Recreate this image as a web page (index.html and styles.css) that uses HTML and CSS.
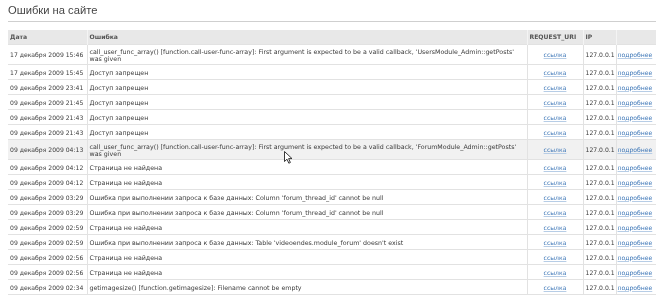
FILE: index.html
```html
<!DOCTYPE html>
<html lang="ru">
<head>
<meta charset="utf-8">
<title>Ошибки на сайте</title>
<link rel="stylesheet" href="styles.css">
</head>
<body>
<h1 class="title">Ошибки на сайте</h1>
<table class="errors">
<colgroup>
<col class="c-date"><col class="c-err"><col class="c-uri"><col class="c-ip"><col class="c-more">
</colgroup>
<thead>
<tr><th>Дата</th><th>Ошибка</th><th>REQUEST_URI</th><th>IP</th><th></th></tr>
</thead>
<tbody>
<tr><td>17 декабря 2009 15:46</td><td>call_user_func_array() [function.call-user-func-array]: First argument is expected to be a valid callback, 'UsersModule_Admin::getPosts' was given</td><td class="uri"><a href="#">ссылка</a></td><td class="ip">127.0.0.1</td><td><a href="#">подробнее</a></td></tr>
<tr><td>17 декабря 2009 15:45</td><td>Доступ запрещен</td><td class="uri"><a href="#">ссылка</a></td><td class="ip">127.0.0.1</td><td><a href="#">подробнее</a></td></tr>
<tr><td>09 декабря 2009 23:41</td><td>Доступ запрещен</td><td class="uri"><a href="#">ссылка</a></td><td class="ip">127.0.0.1</td><td><a href="#">подробнее</a></td></tr>
<tr><td>09 декабря 2009 21:45</td><td>Доступ запрещен</td><td class="uri"><a href="#">ссылка</a></td><td class="ip">127.0.0.1</td><td><a href="#">подробнее</a></td></tr>
<tr><td>09 декабря 2009 21:43</td><td>Доступ запрещен</td><td class="uri"><a href="#">ссылка</a></td><td class="ip">127.0.0.1</td><td><a href="#">подробнее</a></td></tr>
<tr><td>09 декабря 2009 21:43</td><td>Доступ запрещен</td><td class="uri"><a href="#">ссылка</a></td><td class="ip">127.0.0.1</td><td><a href="#">подробнее</a></td></tr>
<tr class="hover"><td>09 декабря 2009 04:13</td><td class="cursor-cell">call_user_func_array() [function.call-user-func-array]: First argument is expected to be a valid callback, 'ForumModule_Admin::getPosts' was given<svg class="cursor" width="9" height="13" viewBox="0 0 9 13"><path d="M0.5 0.5 L0.5 10.5 L3 8.2 L4.8 12.2 L6.4 11.5 L4.6 7.6 L8 7.6 Z" fill="#fff" stroke="#222" stroke-width="0.9" stroke-linejoin="round"/></svg></td><td class="uri"><a href="#">ссылка</a></td><td class="ip">127.0.0.1</td><td><a href="#">подробнее</a></td></tr>
<tr><td>09 декабря 2009 04:12</td><td>Страница не найдена</td><td class="uri"><a href="#">ссылка</a></td><td class="ip">127.0.0.1</td><td><a href="#">подробнее</a></td></tr>
<tr><td>09 декабря 2009 04:12</td><td>Страница не найдена</td><td class="uri"><a href="#">ссылка</a></td><td class="ip">127.0.0.1</td><td><a href="#">подробнее</a></td></tr>
<tr><td>09 декабря 2009 03:29</td><td>Ошибка при выполнении запроса к базе данных: Column 'forum_thread_id' cannot be null</td><td class="uri"><a href="#">ссылка</a></td><td class="ip">127.0.0.1</td><td><a href="#">подробнее</a></td></tr>
<tr><td>09 декабря 2009 03:29</td><td>Ошибка при выполнении запроса к базе данных: Column 'forum_thread_id' cannot be null</td><td class="uri"><a href="#">ссылка</a></td><td class="ip">127.0.0.1</td><td><a href="#">подробнее</a></td></tr>
<tr><td>09 декабря 2009 02:59</td><td>Страница не найдена</td><td class="uri"><a href="#">ссылка</a></td><td class="ip">127.0.0.1</td><td><a href="#">подробнее</a></td></tr>
<tr><td>09 декабря 2009 02:59</td><td>Ошибка при выполнении запроса к базе данных: Table 'videoendes.module_forum' doesn't exist</td><td class="uri"><a href="#">ссылка</a></td><td class="ip">127.0.0.1</td><td><a href="#">подробнее</a></td></tr>
<tr><td>09 декабря 2009 02:56</td><td>Страница не найдена</td><td class="uri"><a href="#">ссылка</a></td><td class="ip">127.0.0.1</td><td><a href="#">подробнее</a></td></tr>
<tr><td>09 декабря 2009 02:56</td><td>Страница не найдена</td><td class="uri"><a href="#">ссылка</a></td><td class="ip">127.0.0.1</td><td><a href="#">подробнее</a></td></tr>
<tr><td>09 декабря 2009 02:34</td><td>getimagesize() [function.getimagesize]: Filename cannot be empty</td><td class="uri"><a href="#">ссылка</a></td><td class="ip">127.0.0.1</td><td><a href="#">подробнее</a></td></tr>
</tbody>
</table>
</body>
</html>
```
FILE: styles.css
```css
html, body {
  background: #fff;
}
body {
  margin: 0 8px;
  font-family: "DejaVu Sans", Verdana, sans-serif;
  color: #333;
}
.title {
  margin: 0;
  padding: 4px 0 5px;
  font-family: "Liberation Sans", Arial, sans-serif;
  font-weight: normal;
  font-size: 11.2px;
  line-height: 12px;
  color: #444;
  border-bottom: 1px solid #cfcfcf;
  will-change: transform;
}
.errors {
  margin-top: 8px;
  width: 100%;
  table-layout: fixed;
  border-collapse: collapse;
  font-size: 6.3px;
  line-height: 7px;
  border-bottom: 1px solid #e2e2e2;
  will-change: transform;
}
.c-date { width: 79px; }
.c-uri { width: 56px; }
.c-ip { width: 33px; }
.c-more { width: 40px; }
.errors th {
  background: #e8e8e8;
  color: #555;
  font-weight: bold;
  font-size: 6.1px;
  line-height: 8px;
  text-align: left;
  padding: 3px 2px;
  border-left: 1px solid #f4f4f4;
  white-space: nowrap;
}
.errors th:first-child { border-left: 0; }
.errors td {
  height: 9px;
  padding: 2.5px 2px;
  border-top: 1px solid #e2e2e2;
  border-left: 1px solid #e2e2e2;
  vertical-align: middle;
  color: #3a3a3a;
}
.errors td:first-child {
  border-left: 0;
  padding-left: 2px;
  padding-right: 1px;
  font-size: 6.1px;
  white-space: nowrap;
}
.errors tr.hover td { background: #f1f1f1; }
.errors td.uri { text-align: center; font-size: 6.1px; }
.errors td.ip { white-space: nowrap; font-size: 6.1px; padding: 2.5px 1px 2.5px 2px; }
.errors td:last-child { white-space: nowrap; font-size: 6.1px; padding: 2.5px 1px; }
.errors a {
  color: #3f78b8;
  text-decoration: underline;
  text-decoration-color: #b7cde6;
}
.cursor-cell { position: relative; }
.cursor {
  position: absolute;
  left: 196px;
  top: 11px;
}
```
